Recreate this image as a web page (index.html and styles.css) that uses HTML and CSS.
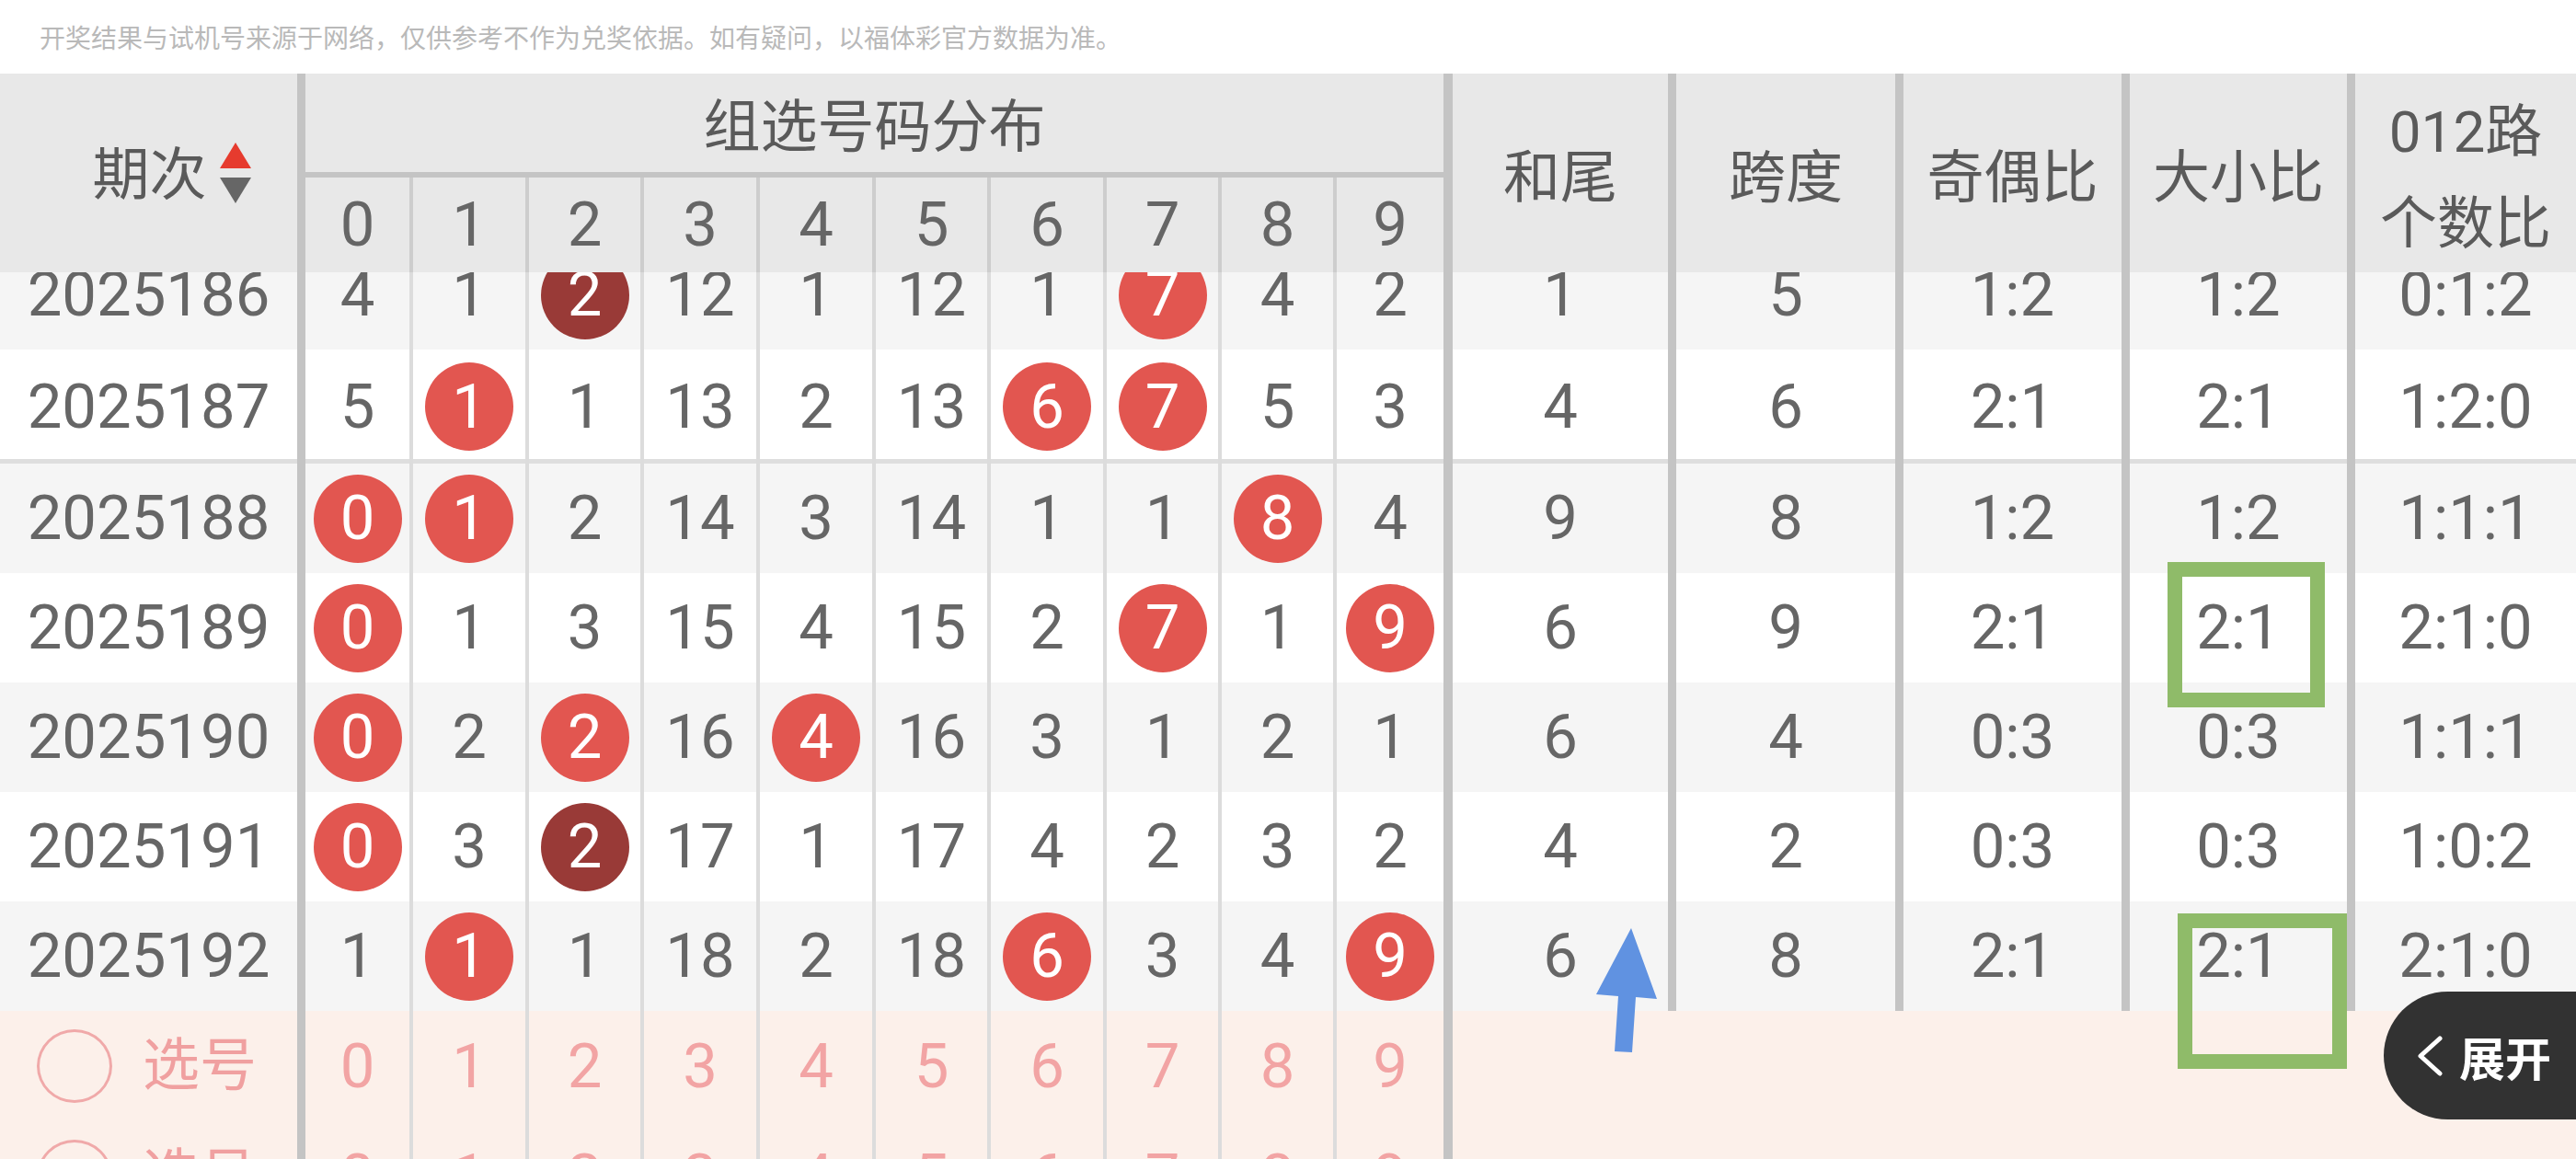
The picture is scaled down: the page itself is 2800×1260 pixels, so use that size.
FILE: index.html
```html
<!DOCTYPE html>
<html lang="zh-CN">
<head>
<meta charset="utf-8">
<title>组选号码分布</title>
<link rel="stylesheet" href="styles.css">
</head>
<body>
<div class="page">
  <div class="notice">开奖结果与试机号来源于网络，仅供参考不作为兑奖依据。如有疑问，以福体彩官方数据为准。</div>

  <div class="thead grid">
    <div class="h-qc"><span>期次</span>
      <svg class="sort" width="34" height="66" viewBox="0 0 34 66"><polygon points="17,0 34,28 0,28" fill="#e63b2e"/><polygon points="0,38 34,38 17,66" fill="#666"/></svg>
    </div>
    <div class="h-group">组选号码分布</div>
    <div class="h-d">0</div>
    <div class="h-d">1</div>
    <div class="h-d">2</div>
    <div class="h-d">3</div>
    <div class="h-d">4</div>
    <div class="h-d">5</div>
    <div class="h-d">6</div>
    <div class="h-d">7</div>
    <div class="h-d">8</div>
    <div class="h-d last">9</div>
    <div class="h-r">和尾</div>
    <div class="h-r">跨度</div>
    <div class="h-r">奇偶比</div>
    <div class="h-r">大小比</div>
    <div class="h-r last">012路<br>个数比</div>
  </div>

  <div class="tbody">
    <div class="scroll">
      <div class="row grid alt">
        <div class="c qc">2025186</div>
        <div class="c d">4</div><div class="c d">1</div><div class="c d"><span class="b dk">2</span></div><div class="c d">12</div><div class="c d">1</div>
        <div class="c d">12</div><div class="c d">1</div><div class="c d"><span class="b">7</span></div><div class="c d">4</div><div class="c d9">2</div>
        <div class="c r">1</div><div class="c r">5</div><div class="c r">1:2</div><div class="c r">1:2</div><div class="c rl">0:1:2</div>
      </div>
      <div class="row grid sep">
        <div class="c qc">2025187</div>
        <div class="c d">5</div><div class="c d"><span class="b">1</span></div><div class="c d">1</div><div class="c d">13</div><div class="c d">2</div>
        <div class="c d">13</div><div class="c d"><span class="b">6</span></div><div class="c d"><span class="b">7</span></div><div class="c d">5</div><div class="c d9">3</div>
        <div class="c r">4</div><div class="c r">6</div><div class="c r">2:1</div><div class="c r">2:1</div><div class="c rl">1:2:0</div>
      </div>
      <div class="row grid alt">
        <div class="c qc">2025188</div>
        <div class="c d"><span class="b">0</span></div><div class="c d"><span class="b">1</span></div><div class="c d">2</div><div class="c d">14</div><div class="c d">3</div>
        <div class="c d">14</div><div class="c d">1</div><div class="c d">1</div><div class="c d"><span class="b">8</span></div><div class="c d9">4</div>
        <div class="c r">9</div><div class="c r">8</div><div class="c r">1:2</div><div class="c r">1:2</div><div class="c rl">1:1:1</div>
      </div>
      <div class="row grid">
        <div class="c qc">2025189</div>
        <div class="c d"><span class="b">0</span></div><div class="c d">1</div><div class="c d">3</div><div class="c d">15</div><div class="c d">4</div>
        <div class="c d">15</div><div class="c d">2</div><div class="c d"><span class="b">7</span></div><div class="c d">1</div><div class="c d9"><span class="b">9</span></div>
        <div class="c r">6</div><div class="c r">9</div><div class="c r">2:1</div><div class="c r">2:1</div><div class="c rl">2:1:0</div>
      </div>
      <div class="row grid alt">
        <div class="c qc">2025190</div>
        <div class="c d"><span class="b">0</span></div><div class="c d">2</div><div class="c d"><span class="b">2</span></div><div class="c d">16</div><div class="c d"><span class="b">4</span></div>
        <div class="c d">16</div><div class="c d">3</div><div class="c d">1</div><div class="c d">2</div><div class="c d9">1</div>
        <div class="c r">6</div><div class="c r">4</div><div class="c r">0:3</div><div class="c r">0:3</div><div class="c rl">1:1:1</div>
      </div>
      <div class="row grid">
        <div class="c qc">2025191</div>
        <div class="c d"><span class="b">0</span></div><div class="c d">3</div><div class="c d"><span class="b dk">2</span></div><div class="c d">17</div><div class="c d">1</div>
        <div class="c d">17</div><div class="c d">4</div><div class="c d">2</div><div class="c d">3</div><div class="c d9">2</div>
        <div class="c r">4</div><div class="c r">2</div><div class="c r">0:3</div><div class="c r">0:3</div><div class="c rl">1:0:2</div>
      </div>
      <div class="row grid alt">
        <div class="c qc">2025192</div>
        <div class="c d">1</div><div class="c d"><span class="b">1</span></div><div class="c d">1</div><div class="c d">18</div><div class="c d">2</div>
        <div class="c d">18</div><div class="c d"><span class="b">6</span></div><div class="c d">3</div><div class="c d">4</div><div class="c d9"><span class="b">9</span></div>
        <div class="c r">6</div><div class="c r">8</div><div class="c r">2:1</div><div class="c r">2:1</div><div class="c rl">2:1:0</div>
      </div>
      <div class="pick grid">
        <div class="c qc"><span class="ring"></span><span>选号</span></div>
        <div class="c d">0</div><div class="c d">1</div><div class="c d">2</div><div class="c d">3</div><div class="c d">4</div>
        <div class="c d">5</div><div class="c d">6</div><div class="c d">7</div><div class="c d">8</div><div class="c d9">9</div>
        <div class="rest"></div>
      </div>
      <div class="pick grid">
        <div class="c qc"><span class="ring"></span><span>选号</span></div>
        <div class="c d">0</div><div class="c d">1</div><div class="c d">2</div><div class="c d">3</div><div class="c d">4</div>
        <div class="c d">5</div><div class="c d">6</div><div class="c d">7</div><div class="c d">8</div><div class="c d9">9</div>
        <div class="rest"></div>
      </div>
    </div>
  </div>

  <svg class="pointer" width="100" height="150" viewBox="0 0 100 150"><polygon points="53,9 81,86 58,84 54,144 35,143 39,83 15,81" fill="#6092e1"/></svg>
  <div class="mark mark1"></div>
  <div class="mark mark2"></div>
  <div class="expand">
    <svg width="30" height="44" viewBox="0 0 30 44"><polyline points="26,3 5,22 26,41" fill="none" stroke="#fff" stroke-width="5" stroke-linecap="round" stroke-linejoin="round"/></svg>
    <span>展开</span>
  </div>
</div>
</body>
</html>
```

FILE: styles.css
```css
* { box-sizing: border-box; }

body {
  margin: 0;
  width: 2800px;
  height: 1260px;
  overflow: hidden;
  background: #fff;
  font-family: Roboto, "Noto Sans CJK SC", sans-serif;
}

.page {
  position: relative;
  width: 2800px;
  height: 1260px;
  overflow: hidden;
}

.notice {
  height: 80px;
  padding-left: 43px;
  display: flex;
  align-items: center;
  font-family: "Noto Sans CJK SC", sans-serif;
  font-size: 28px;
  color: #b9b9b9;
}

.grid {
  display: grid;
  grid-template-columns: 332px 117px 126px 125px 126px 126px 125px 126px 125px 125px 126px 243px 247px 246px 245px 240px;
}

/* header */
.thead {
  background: #e8e8e8;
  grid-template-rows: 113px 103px;
  color: #5a5a5a;
}

.h-qc {
  grid-row: 1 / 3;
  grid-column: 1;
  border-right: 9px solid #c4c4c4;
  display: flex;
  align-items: center;
  justify-content: center;
  gap: 14px;
  padding-left: 50px;
  padding-top: 6px;
  font-size: 62px;
  line-height: 1;
}

.h-qc .sort { margin-top: -6px; }

.h-group {
  grid-row: 1;
  grid-column: 2 / 12;
  border-right: 10px solid #c4c4c4;
  border-bottom: 6px solid #c4c4c4;
  display: flex;
  align-items: center;
  justify-content: center;
  font-size: 62px;
  line-height: 1;
  padding-top: 10px;
}

.h-d {
  grid-row: 2;
  border-right: 4px solid #cdcdcd;
  display: flex;
  align-items: center;
  justify-content: center;
  font-size: 67px;
  line-height: 1;
  color: #666;
}

.h-d.last { border-right: 10px solid #c4c4c4; }

.h-r {
  grid-row: 1 / 3;
  border-right: 9px solid #c4c4c4;
  display: flex;
  align-items: center;
  justify-content: center;
  text-align: center;
  font-size: 62px;
  line-height: 1;
  padding-top: 12px;
}

.h-r.last {
  border-right: none;
  line-height: 100px;
  padding-top: 12px;
}

/* body */
.tbody {
  height: 964px;
  overflow: hidden;
}

.scroll { margin-top: -35px; }

.row {
  height: 119px;
  background: #fff;
  color: #666;
  font-size: 67px;
}

.row.alt { background: #f5f5f5; }

.row.sep {
  height: 124px;
  background: linear-gradient(to top, #dedede 5px, #fff 5px);
}

.c {
  display: flex;
  align-items: center;
  justify-content: center;
  line-height: 1;
}

.qc { border-right: 9px solid #c4c4c4; }
.d { border-right: 4px solid #dcdcdc; }
.d9 { border-right: 10px solid #c4c4c4; }
.r { border-right: 9px solid #c4c4c4; }

.b {
  width: 96px;
  height: 96px;
  border-radius: 50%;
  background: #e25650;
  color: #fff;
  display: flex;
  align-items: center;
  justify-content: center;
}

.b.dk { background: #993a37; }

/* pick rows */
.pick {
  height: 120px;
  background: #fcf0ea;
  color: #f2a4a4;
  font-size: 67px;
}

.pick .qc {
  justify-content: flex-start;
  padding-left: 40px;
  gap: 33px;
  font-size: 62px;
  color: #f0a0a0;
}

.ring {
  width: 82px;
  height: 80px;
  border: 3px solid #f0a9a9;
  border-radius: 50%;
}

.rest { grid-column: 12 / 17; }

/* overlays */
.pointer {
  position: absolute;
  left: 1720px;
  top: 1000px;
}

.mark {
  position: absolute;
  border: 16px solid #8fbb69;
}

.mark1 { left: 2356px; top: 611px; width: 171px; height: 158px; }
.mark2 { left: 2367px; top: 993px; width: 184px; height: 169px; }

.expand {
  position: absolute;
  left: 2591px;
  top: 1078px;
  width: 209px;
  height: 139px;
  border-radius: 70px 0 0 70px;
  background: #323232;
  color: #fff;
  display: flex;
  align-items: center;
  gap: 17px;
  padding-left: 35px;
  font-family: "Noto Sans CJK SC", sans-serif;
  font-size: 50px;
  font-weight: bold;
  line-height: 1;
}
```
